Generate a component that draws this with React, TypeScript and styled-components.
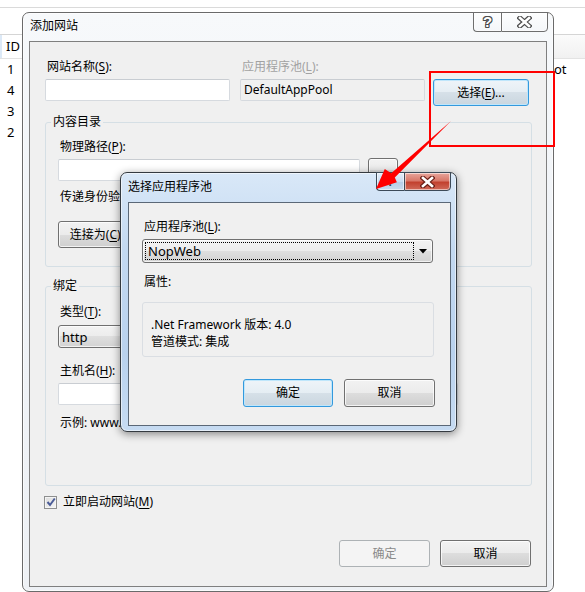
import React from "react";
import styled, { createGlobalStyle } from "styled-components";

const FONT = `"Noto Sans", "Noto Sans CJK SC", sans-serif`;

const GlobalStyle = createGlobalStyle`
  html, body { margin: 0; padding: 0; background: #ffffff; }
  body { font-family: ${FONT}; font-size: 12px; line-height: 16px; color: #000; }
  * { box-sizing: border-box; }
  u { text-underline-offset: 2px; }
`;

const Screen = styled.div`
  position: relative;
  width: 585px;
  height: 592px;
  overflow: hidden;
  background: #ffffff;
`;

/* ---------- background application list ---------- */
const ListView = styled.div`
  display: flex;
  flex-direction: column;
  padding-top: 7px;
`;
const TopRule = styled.div`
  height: 1px;
  background: #dadada;
  margin-bottom: 26px;
`;
const ListHeader = styled.div`
  display: grid;
  grid-template-columns: 22px 532px 1fr;
  height: 25px;
  border-top: 1px solid #d5d5d5;
  border-bottom: 1px solid #e3e3e3;
  background: linear-gradient(#fbfbfb, #f1f1f1);
`;
const HeaderCell = styled.div<{ $sorted?: boolean }>`
  padding-left: 6px;
  line-height: 23px;
  font-size: 13px;
  ${(p) => p.$sorted && `background: #ffffff; box-shadow: inset 2px 0 0 #dce9f7;`}
`;
const ListRow = styled.div`
  display: grid;
  grid-template-columns: 22px 532px 1fr;
  height: 21px;
  line-height: 21px;
`;
const Cell = styled.div<{ $pad?: number }>`
  padding-left: ${(p) => p.$pad ?? 7}px;
  font-size: 13px;
  white-space: nowrap;
  overflow: hidden;
`;

/* ---------- windows ---------- */
const Window = styled.div<{
  $x: number;
  $y: number;
  $w: number;
  $h: number;
  $active?: boolean;
}>`
  position: absolute;
  left: ${(p) => p.$x}px;
  top: ${(p) => p.$y}px;
  width: ${(p) => p.$w}px;
  height: ${(p) => p.$h}px;
  display: flex;
  flex-direction: column;
  border: 1px solid ${(p) => (p.$active ? "#343a40" : "#6a6a6a")};
  border-radius: 7px;
  padding: ${(p) => (p.$active ? "0 5px 5px 7px" : "0 6px 4px 6px")};
  background: ${(p) =>
    p.$active
      ? "linear-gradient(180deg, #d9e8f8 0%, #c3d9f1 30%, #b9d2ee 70%, #c6dbf2 100%)"
      : "linear-gradient(180deg, #f7f9fb 0%, #f0f3f7 40%, #eef1f5 100%)"};
  box-shadow: ${(p) =>
    p.$active
      ? "0 2px 8px rgba(0,0,0,0.45), inset 0 0 0 1px rgba(255,255,255,0.55)"
      : "inset 0 0 0 1px rgba(255,255,255,0.7)"};
`;

const TitleBar = styled.div<{ $h: number }>`
  display: flex;
  align-items: flex-start;
  height: ${(p) => p.$h}px;
  flex-shrink: 0;
`;

const TitleText = styled.div<{ $top: number; $left: number }>`
  flex: 1;
  padding-top: ${(p) => p.$top}px;
  padding-left: ${(p) => p.$left}px;
  line-height: 16px;
  color: #000;
`;

const CaptionGroup = styled.div<{ $right: number }>`
  display: flex;
  margin-top: -1px;
  margin-right: ${(p) => p.$right}px;
`;

const CaptionButton = styled.div<{
  $kind: "help" | "close";
  $active?: boolean;
  $h: number;
}>`
  width: ${(p) => (p.$kind === "help" ? 28 : 47)}px;
  height: ${(p) => p.$h}px;
  display: flex;
  align-items: center;
  justify-content: center;
  border: 1px solid ${(p) => (p.$active ? "#3c4a58" : "#6e6e6e")};
  ${(p) => (p.$kind === "help" ? "border-right: none; border-radius: 0 0 0 4px;" : "border-radius: 0 0 4px 0;")}
  background: ${(p) =>
    p.$kind === "close" && p.$active
      ? "linear-gradient(180deg, #e8a59b 0%, #d8786a 45%, #c2412f 55%, #d06a5a 100%)"
      : p.$active
      ? "linear-gradient(180deg, #e4eef9 0%, #c9dcf1 50%, #b5cde8 51%, #c9dbee 100%)"
      : "linear-gradient(180deg, rgba(255,255,255,0.8) 0%, rgba(244,246,249,0.8) 100%)"};
  box-shadow: inset 0 0 0 1px rgba(255, 255, 255, 0.55);
`;

const HelpGlyph = styled.span<{ $active?: boolean }>`
  font-family: "Liberation Sans", sans-serif;
  font-weight: bold;
  font-size: ${(p) => (p.$active ? 12 : 15)}px;
  line-height: 16px;
  color: ${(p) => (p.$active ? "#2c3e55" : "#ffffff")};
  ${(p) =>
    !p.$active &&
    `text-shadow: 1px 0 #4d4d4d, -1px 0 #4d4d4d, 0 1px #4d4d4d, 0 -1px #4d4d4d, 1px 1px #4d4d4d, -1px -1px #4d4d4d, 1px -1px #4d4d4d, -1px 1px #4d4d4d;`}
`;

const CloseGlyph = ({ dark }: { dark: string }) => (
  <svg width="15" height="12" viewBox="0 0 15 12">
    <path d="M3 2 L12 10 M12 2 L3 10" stroke={dark} strokeWidth="5" strokeLinecap="square" />
    <path d="M3 2 L12 10 M12 2 L3 10" stroke="#ffffff" strokeWidth="2.6" strokeLinecap="square" />
  </svg>
);

const Client = styled.div<{ $active?: boolean }>`
  flex: 1;
  display: flex;
  flex-direction: column;
  background: #f0f0f0;
  border: 1px solid ${(p) => (p.$active ? "#5b6877" : "#7f7f7f")};
`;

/* ---------- form parts ---------- */
const Label = styled.div<{ $disabled?: boolean; $mt?: number; $mb?: number }>`
  height: 16px;
  line-height: 16px;
  padding-left: 2px;
  margin-top: ${(p) => p.$mt ?? 0}px;
  margin-bottom: ${(p) => p.$mb ?? 4}px;
  color: ${(p) => (p.$disabled ? "#a2a2a2" : "#000")};
  white-space: nowrap;
`;

const TextBox = styled.div<{ $w?: number; $readOnly?: boolean }>`
  width: ${(p) => (p.$w ? `${p.$w}px` : "100%")};
  height: 22px;
  line-height: 20px;
  padding-left: 3px;
  border: 1px solid #d6dadf;
  border-top-color: #c9cdd2;
  border-radius: 2px;
  background: ${(p) => (p.$readOnly ? "#f0f0f0" : "#ffffff")};
  white-space: nowrap;
  overflow: hidden;
`;

const PushButton = styled.div<{
  $w: number;
  $h?: number;
  $focused?: boolean;
  $disabled?: boolean;
  $mt?: number;
  $ml?: number;
}>`
  width: ${(p) => p.$w}px;
  height: ${(p) => p.$h ?? 27}px;
  margin-top: ${(p) => p.$mt ?? 0}px;
  margin-left: ${(p) => p.$ml ?? 0}px;
  flex-shrink: 0;
  display: flex;
  align-items: center;
  justify-content: center;
  border-radius: 3px;
  white-space: nowrap;
  border: 1px solid ${(p) => (p.$disabled ? "#adb2b5" : p.$focused ? "#3399dd" : "#707070")};
  color: ${(p) => (p.$disabled ? "#8a8a8a" : "#000")};
  background: ${(p) =>
    p.$disabled
      ? "#f4f4f4"
      : p.$focused
      ? "linear-gradient(180deg, #eef4f9 0%, #e5edf3 50%, #d6e0e8 50%, #cad6df 100%)"
      : "linear-gradient(180deg, #f2f2f2 0%, #ebebeb 50%, #dddddd 50%, #cfcfcf 100%)"};
  box-shadow: ${(p) =>
    p.$disabled
      ? "none"
      : p.$focused
      ? "inset 0 0 0 1px #bfe6fb"
      : "inset 0 0 0 1px rgba(255,255,255,0.75)"};
`;

const ComboBox = styled.div<{ $w: number; $h: number }>`
  width: ${(p) => p.$w}px;
  height: ${(p) => p.$h}px;
  display: flex;
  align-items: stretch;
  border: 1px solid #707070;
  border-radius: 3px;
  background: linear-gradient(180deg, #f3f3f3 0%, #ececec 50%, #dfdfdf 50%, #d3d3d3 100%);
  box-shadow: inset 0 0 0 1px rgba(255, 255, 255, 0.7);
  flex-shrink: 0;
`;

const ComboText = styled.div<{ $focusRect?: boolean }>`
  flex: 1;
  margin: 2px 0 2px 2px;
  padding-left: ${(p) => (p.$focusRect ? 2 : 0)}px;
  display: flex;
  align-items: center;
  border: 1px dotted ${(p) => (p.$focusRect ? "#000" : "transparent")};
  font-size: 13px;
`;

const ComboArrow = styled.div`
  width: 18px;
  display: flex;
  align-items: center;
  justify-content: center;
`;

const GroupBox = styled.fieldset<{ $mt: number }>`
  margin: ${(p) => p.$mt}px 14px 0 15px;
  padding: 0;
  min-width: 0;
  border: 1px solid #d5dfe5;
  border-radius: 3px;
`;

const GroupLegend = styled.legend`
  margin-left: 5px;
  padding: 0 2px;
  line-height: 16px;
  height: 16px;
`;

const GroupBody = styled.div<{ $pt: number; $pb: number }>`
  display: flex;
  flex-direction: column;
  align-items: flex-start;
  padding: ${(p) => p.$pt}px 0 ${(p) => p.$pb}px 12px;
`;

const InlineRow = styled.div<{ $gap: number }>`
  display: flex;
  align-items: flex-start;
  gap: ${(p) => p.$gap}px;
`;

/* main dialog specific */
const TopFields = styled.div`
  display: flex;
  align-items: flex-start;
  gap: 10px;
  padding: 17px 0 0 15px;
`;

const Field = styled.div<{ $w: number }>`
  width: ${(p) => p.$w}px;
  display: flex;
  flex-direction: column;
`;

const CheckRow = styled.label`
  display: flex;
  align-items: center;
  gap: 6px;
  height: 16px;
  margin: 8px 0 0 14px;
`;

const CheckBoxBox = styled.span`
  width: 13px;
  height: 13px;
  display: flex;
  align-items: center;
  justify-content: center;
  border: 1px solid #8e8f8f;
  background: linear-gradient(135deg, #dcdcdc 0%, #f4f4f4 100%);
  box-shadow: inset 0 0 0 1px #f4f4f4;
`;

const ButtonBar = styled.div<{ $mt: string; $pr: number; $mb: number; $gap: number }>`
  display: flex;
  justify-content: flex-end;
  gap: ${(p) => p.$gap}px;
  margin-top: ${(p) => p.$mt};
  margin-bottom: ${(p) => p.$mb}px;
  padding-right: ${(p) => p.$pr}px;
`;

/* pool dialog specific */
const PoolBody = styled.div`
  display: flex;
  flex-direction: column;
  padding: 16px 0 0 13px;
`;

const PropsBox = styled.div`
  width: 292px;
  height: 55px;
  margin-top: 12px;
  padding: 13px 0 0 8px;
  border: 1px solid #dadee3;
  border-radius: 3px;
  line-height: 17px;
`;

const PropLine = styled.div`
  white-space: nowrap;
`;

/* annotations */
const Highlight = styled.div`
  position: absolute;
  left: 429px;
  top: 71px;
  width: 126px;
  height: 76px;
  border: 2px solid #ff0000;
  pointer-events: none;
`;

const ArrowLayer = styled.svg`
  position: absolute;
  left: 0;
  top: 0;
  pointer-events: none;
`;

const DownTriangle = () => (
  <svg width="8" height="5" viewBox="0 0 8 5">
    <polygon points="0,0 8,0 4,4.5" fill="#000" />
  </svg>
);

export default function App() {
  return (
    <Screen>
      <GlobalStyle />

      <ListView>
        <TopRule />
        <ListHeader>
          <HeaderCell $sorted>ID</HeaderCell>
          <HeaderCell />
          <HeaderCell />
        </ListHeader>
        <ListRow>
          <Cell>1</Cell>
          <Cell />
          <Cell $pad={0}>ot</Cell>
        </ListRow>
        <ListRow>
          <Cell>4</Cell>
        </ListRow>
        <ListRow>
          <Cell>3</Cell>
        </ListRow>
        <ListRow>
          <Cell>2</Cell>
        </ListRow>
      </ListView>

      {/* 添加网站 */}
      <Window $x={22} $y={12} $w={532} $h={580}>
        <TitleBar $h={28}>
          <TitleText $top={5} $left={1}>添加网站</TitleText>
          <CaptionGroup $right={-1}>
            <CaptionButton $kind="help" $h={20}>
              <HelpGlyph>?</HelpGlyph>
            </CaptionButton>
            <CaptionButton $kind="close" $h={20}>
              <CloseGlyph dark="#4d4d4d" />
            </CaptionButton>
          </CaptionGroup>
        </TitleBar>
        <Client>
          <TopFields>
            <Field $w={185}>
              <Label>
                网站名称(<u>S</u>):
              </Label>
              <TextBox />
            </Field>
            <Field $w={185}>
              <Label $disabled>
                应用程序池(<u>L</u>):
              </Label>
              <TextBox $readOnly>DefaultAppPool</TextBox>
            </Field>
            <PushButton $w={96} $mt={20} $ml={-2} $focused>
              选择(<u>E</u>)...
            </PushButton>
          </TopFields>

          <GroupBox $mt={8}>
            <GroupLegend>内容目录</GroupLegend>
            <GroupBody $pt={9} $pb={18}>
              <Label>
                物理路径(<u>P</u>):
              </Label>
              <InlineRow $gap={8}>
                <TextBox $w={302} />
                <PushButton $w={30} $h={23} $mt={-1}>
                  ...
                </PushButton>
              </InlineRow>
              <Label $mt={8} $mb={0}>
                传递身份验证
              </Label>
              <PushButton $w={84} $mt={16}>
                连接为(<u>C</u>)...
              </PushButton>
            </GroupBody>
          </GroupBox>

          <GroupBox $mt={11}>
            <GroupLegend>绑定</GroupLegend>
            <GroupBody $pt={10} $pb={54}>
              <Label $mb={5}>
                类型(<u>T</u>):
              </Label>
              <ComboBox $w={92} $h={23}>
                <ComboText>http</ComboText>
                <ComboArrow>
                  <DownTriangle />
                </ComboArrow>
              </ComboBox>
              <Label $mt={15}>
                主机名(<u>H</u>):
              </Label>
              <TextBox $w={400} />
              <Label $mt={10} $mb={0}>
                示例: www.contoso.com 或 marketing.contoso.com
              </Label>
            </GroupBody>
          </GroupBox>

          <CheckRow>
            <CheckBoxBox>
              <svg width="10" height="10" viewBox="0 0 10 10">
                <path d="M1.5 5 L4 8 L8.8 1.5" stroke="#4b5c97" strokeWidth="2" fill="none" />
              </svg>
            </CheckBoxBox>
            <span>
              立即启动网站(<u>M</u>)
            </span>
          </CheckRow>

          <ButtonBar $mt="auto" $pr={15} $mb={19} $gap={10}>
            <PushButton $w={91} $disabled>
              确定
            </PushButton>
            <PushButton $w={91}>取消</PushButton>
          </ButtonBar>
        </Client>
      </Window>

      {/* 选择应用程序池 */}
      <Window $x={120} $y={172} $w={337} $h={260} $active>
        <TitleBar $h={29}>
          <TitleText $top={6} $left={0}>选择应用程序池</TitleText>
          <CaptionGroup $right={0}>
            <CaptionButton $kind="help" $active $h={19}>
              <HelpGlyph $active>?</HelpGlyph>
            </CaptionButton>
            <CaptionButton $kind="close" $active $h={19}>
              <CloseGlyph dark="#6b2018" />
            </CaptionButton>
          </CaptionGroup>
        </TitleBar>
        <Client $active>
          <PoolBody>
            <Label>
              应用程序池(<u>L</u>):
            </Label>
            <ComboBox $w={291} $h={24}>
              <ComboText $focusRect>NopWeb</ComboText>
              <ComboArrow>
                <DownTriangle />
              </ComboArrow>
            </ComboBox>
            <Label $mt={11} $mb={0}>
              属性:
            </Label>
            <PropsBox>
              <PropLine>.Net Framework 版本: 4.0</PropLine>
              <PropLine>管道模式: 集成</PropLine>
            </PropsBox>
          </PoolBody>
          <ButtonBar $mt="22px" $pr={15} $mb={0} $gap={11}>
            <PushButton $w={90} $h={28} $focused>
              确定
            </PushButton>
            <PushButton $w={91} $h={28}>
              取消
            </PushButton>
          </ButtonBar>
        </Client>
      </Window>

      <Highlight />
      <ArrowLayer width="585" height="592" viewBox="0 0 585 592">
        <polygon
          points="451,121 394.8,177.6 396.9,182.3 376,189 384.8,168.9 391.2,173.2"
          fill="#ff0000"
        />
      </ArrowLayer>
    </Screen>
  );
}
